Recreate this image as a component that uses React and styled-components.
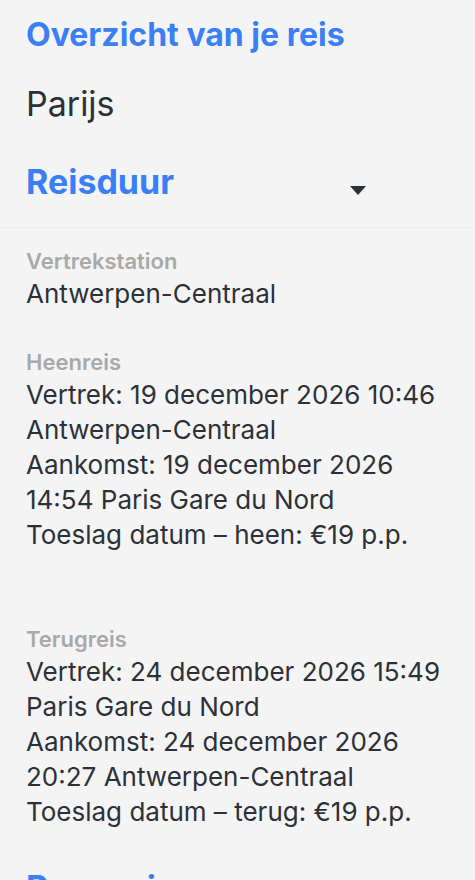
import styled, { createGlobalStyle } from "styled-components";

const GlobalStyle = createGlobalStyle`
  html, body {
    margin: 0;
    padding: 0;
    background: #f4f4f4;
  }
  body {
    font-family: Inter, "Noto Sans", sans-serif;
    color: #2d3137;
  }
`;

const trip = {
  departure: "Antwerpen-Centraal",
  legs: [
    {
      title: "Heenreis",
      lines: [
        "Vertrek: 19 december 2026 10:46 Antwerpen-Centraal",
        "Aankomst: 19 december 2026 14:54 Paris Gare du Nord",
        "Toeslag datum – heen: €19 p.p.",
      ],
    },
    {
      title: "Terugreis",
      lines: [
        "Vertrek: 24 december 2026 15:49 Paris Gare du Nord",
        "Aankomst: 24 december 2026 20:27 Antwerpen-Centraal",
        "Toeslag datum – terug: €19 p.p.",
      ],
    },
  ],
};

const App = () => {
  return (
    <>
      <GlobalStyle />
      <Page>
        <Header>
          <Title>Overzicht van je reis</Title>
          <City>Parijs</City>
          <ToggleRow>
            <SectionTitle>Reisduur</SectionTitle>
            <Caret />
          </ToggleRow>
        </Header>
        <Details>
          <Block>
            <Label>Vertrekstation</Label>
            <Text>{trip.departure}</Text>
          </Block>
          {trip.legs.map((leg, i) => (
            <Block key={leg.title} $gap={i === 0 ? 36 : 72}>
              <Label>{leg.title}</Label>
              {leg.lines.map((line) => (
                <Text key={line}>{line}</Text>
              ))}
            </Block>
          ))}
          <NextTitle>Passagiers</NextTitle>
        </Details>
      </Page>
    </>
  );
};

const Page = styled.main`
  height: 100vh;
  background: #f4f4f4;
  overflow: hidden;
`;

const Header = styled.header`
  display: flex;
  flex-direction: column;
  padding: 15px 26px 25px;
  border-bottom: 1px solid #e6ecf8;
`;

const Title = styled.h1`
  margin: 0;
  font-size: 32px;
  font-weight: 700;
  line-height: 40px;
  color: #3a7ff6;
`;

const City = styled.div`
  margin-top: 29px;
  font-size: 34px;
  font-weight: 400;
  line-height: 40px;
  color: #2d3137;
`;

const ToggleRow = styled.div`
  display: flex;
  align-items: center;
  justify-content: space-between;
  width: 340px;
  margin-top: 38px;
`;

const SectionTitle = styled.h2`
  margin: 0;
  font-size: 34px;
  font-weight: 700;
  line-height: 40px;
  color: #3a7ff6;
`;

const Caret = styled.span`
  width: 0;
  height: 0;
  margin-top: 16px;
  border-left: 8px solid transparent;
  border-right: 8px solid transparent;
  border-top: 9px solid #2d3137;
`;

const Details = styled.section`
  padding: 18px 26px 0;
`;

const Block = styled.div`
  display: flex;
  flex-direction: column;
  margin-top: ${({ $gap = 0 }) => $gap}px;
`;

const Label = styled.div`
  font-size: 22px;
  font-weight: 600;
  line-height: 30px;
  color: #a9a9a9;
`;

const Text = styled.p`
  margin: 0;
  font-size: 26px;
  line-height: 35px;
  color: #2d3137;
`;

const NextTitle = styled.h2`
  margin: 39px 0 0;
  font-size: 34px;
  font-weight: 700;
  line-height: 40px;
  color: #3a7ff6;
`;

export default App;
